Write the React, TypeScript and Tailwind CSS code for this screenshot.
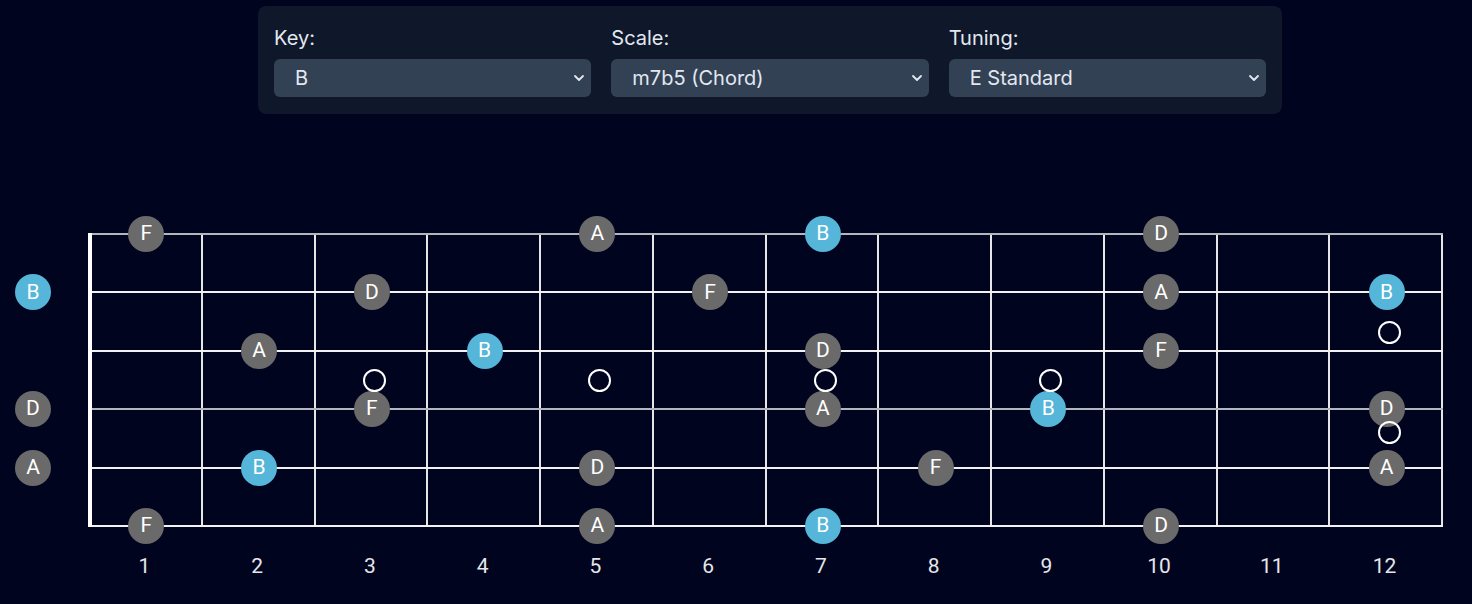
import React from 'react'

type Note = { string: number; fret: number; name: string; root?: boolean }

const FRET_W = 1353 / 12
const STRING_GAP = 292 / 5

const strings = [
  { color: 'bg-[#b4b5bd]' },
  { color: 'bg-[#f2f2f2]' },
  { color: 'bg-[#f2f2f2]' },
  { color: 'bg-[#b4b5bd]' },
  { color: 'bg-[#f2f2f2]' },
  { color: 'bg-[#f2f2f2]' },
]

// fret 0 = open string, drawn left of the nut
const notes: Note[] = [
  { string: 0, fret: 1, name: 'F' },
  { string: 0, fret: 5, name: 'A' },
  { string: 0, fret: 7, name: 'B', root: true },
  { string: 0, fret: 10, name: 'D' },
  { string: 1, fret: 0, name: 'B', root: true },
  { string: 1, fret: 3, name: 'D' },
  { string: 1, fret: 6, name: 'F' },
  { string: 1, fret: 10, name: 'A' },
  { string: 1, fret: 12, name: 'B', root: true },
  { string: 2, fret: 2, name: 'A' },
  { string: 2, fret: 4, name: 'B', root: true },
  { string: 2, fret: 7, name: 'D' },
  { string: 2, fret: 10, name: 'F' },
  { string: 3, fret: 0, name: 'D' },
  { string: 3, fret: 3, name: 'F' },
  { string: 3, fret: 7, name: 'A' },
  { string: 3, fret: 9, name: 'B', root: true },
  { string: 3, fret: 12, name: 'D' },
  { string: 4, fret: 0, name: 'A' },
  { string: 4, fret: 2, name: 'B', root: true },
  { string: 4, fret: 5, name: 'D' },
  { string: 4, fret: 8, name: 'F' },
  { string: 4, fret: 12, name: 'A' },
  { string: 5, fret: 1, name: 'F' },
  { string: 5, fret: 5, name: 'A' },
  { string: 5, fret: 7, name: 'B', root: true },
  { string: 5, fret: 10, name: 'D' },
]

// inlay markers: fret + y offset inside the board
const markers = [
  { fret: 3, y: 147 },
  { fret: 5, y: 147 },
  { fret: 7, y: 147 },
  { fret: 9, y: 147 },
  { fret: 12, y: 99 },
  { fret: 12, y: 199 },
]

const noteX = (fret: number) => (fret === 0 ? -57 : (fret - 0.5) * FRET_W)

const Chevron = () => (
  <svg width="12" height="8" viewBox="0 0 12 8" fill="none" className="shrink-0">
    <path d="M2 2l4 4 4-4" stroke="#e2e8f0" strokeWidth="1.8" strokeLinecap="round" strokeLinejoin="round" />
  </svg>
)

const SelectField = ({ label, value }: { label: string; value: string }) => (
  <div className="flex flex-col">
    <label className="text-xl leading-8 text-[#e2e8f0] mb-[5px]">{label}</label>
    <div className="h-[38px] rounded-md bg-[#334155] flex items-center justify-between pl-[21px] pr-[6px] text-xl text-[#e2e8f0]">
      <span>{value}</span>
      <Chevron />
    </div>
  </div>
)

export default function App() {
  return (
    <div className="min-h-screen w-full bg-[#01041e] pt-[6px]" style={{ fontFamily: 'Inter, "Noto Sans", sans-serif' }}>
      {/* Controls */}
      <div className="ml-[258px] w-[1024px] rounded-lg bg-[#0f172a] p-4 pb-[17px]">
        <div className="grid grid-cols-3 gap-5">
          <SelectField label="Key:" value="B" />
          <SelectField label="Scale:" value="m7b5 (Chord)" />
          <SelectField label="Tuning:" value="E Standard" />
        </div>
      </div>

      {/* Fretboard */}
      <div className="mt-[119px] pl-[90px]" style={{ fontFamily: 'Roboto, "Liberation Sans", sans-serif' }}>
        <div className="relative w-[1353px] h-[294px]">
          {/* frets */}
          <div className="absolute inset-0 flex">
            {Array.from({ length: 12 }).map((_, i) => (
              <div key={i} className="flex-1 border-r-2 border-[#e6e6e6]" />
            ))}
          </div>
          {/* strings */}
          <div className="absolute inset-0 flex flex-col justify-between">
            {strings.map((s, i) => (
              <div key={i} className={`h-[2px] w-full ${s.color}`} />
            ))}
          </div>
          {/* nut */}
          <div className="absolute left-[-2px] top-0 bottom-0 w-1 bg-white" />

          {/* notes */}
          {notes.map((n, i) => (
            <div
              key={i}
              className={`absolute w-9 h-9 -ml-[18px] -mt-[18px] rounded-full flex items-center justify-center text-[21px] text-white ${
                n.root ? 'bg-[#55b6d9]' : 'bg-[#6a6a6a]'
              }`}
              style={{ left: noteX(n.fret), top: 1 + n.string * STRING_GAP }}
            >
              {n.name}
            </div>
          ))}

          {/* inlays */}
          {markers.map((m, i) => (
            <div
              key={i}
              className="absolute w-[23px] h-[23px] -ml-[11.5px] -mt-[11.5px] rounded-full border-2 border-white"
              style={{ left: noteX(m.fret) + 2.5, top: m.y }}
            />
          ))}
        </div>

        {/* fret numbers */}
        <div className="flex w-[1353px] mt-[25px]">
          {Array.from({ length: 12 }).map((_, i) => (
            <div key={i} className="flex-1 text-center text-[21px] leading-7 text-[#e5e7eb] pr-[4px]">
              {i + 1}
            </div>
          ))}
        </div>
      </div>
    </div>
  )
}
